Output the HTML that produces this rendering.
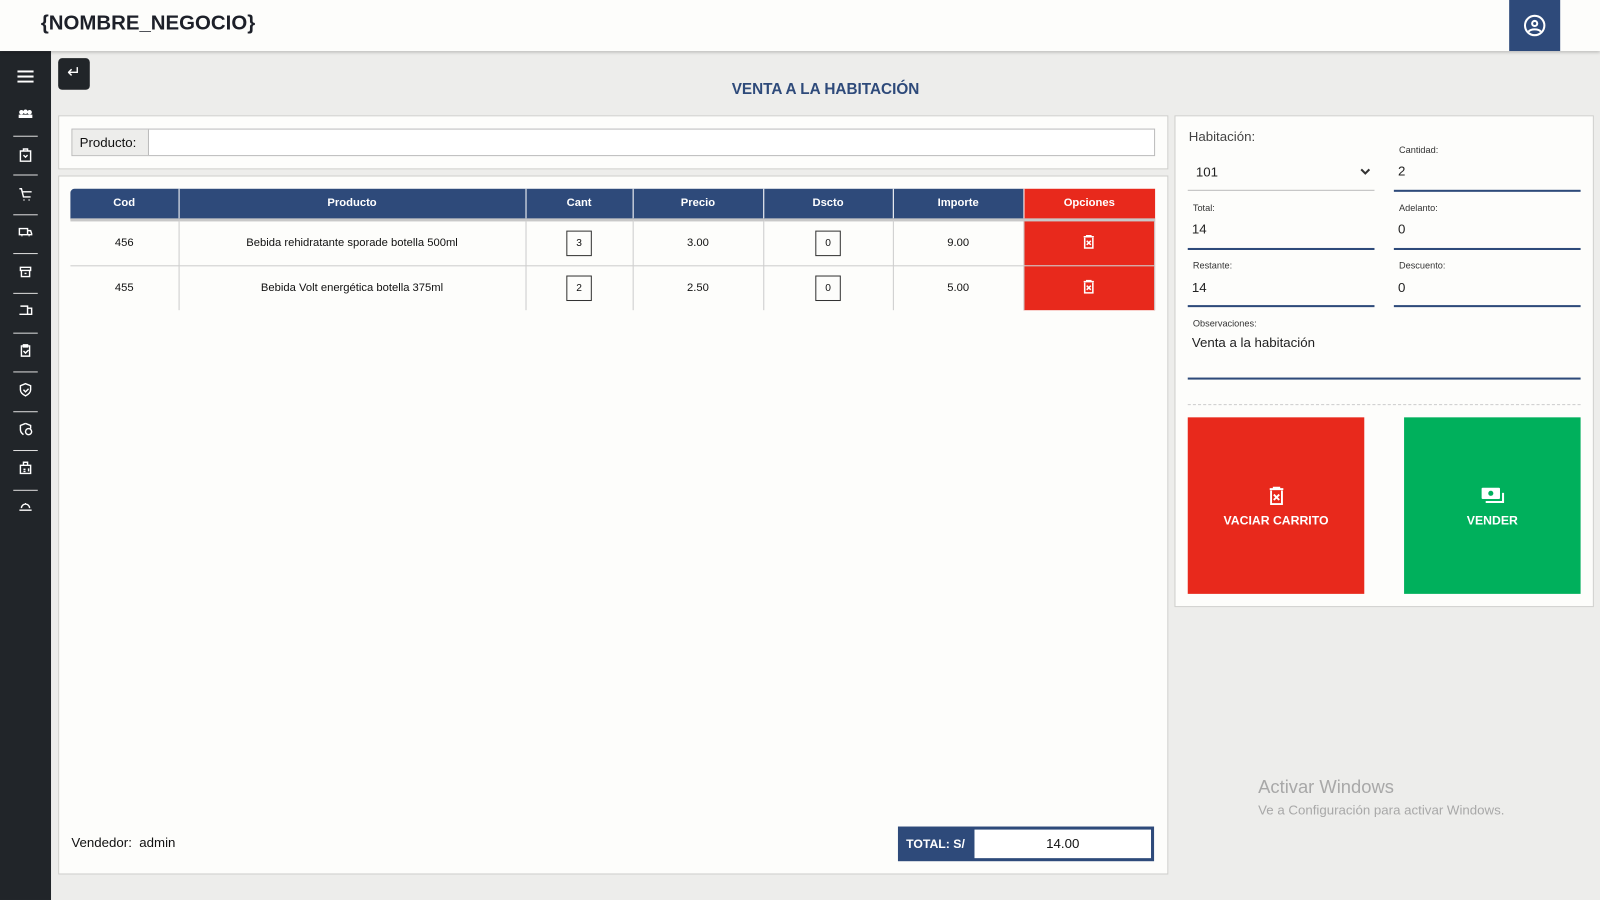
<!DOCTYPE html>
<html><head><meta charset="utf-8"><style>
*{box-sizing:border-box;margin:0;padding:0}
body{width:1600px;height:900px;background:#fdfdfb;font-family:"Liberation Sans",sans-serif;position:relative;overflow:hidden;color:#111}
#wrap{position:absolute;left:0;top:0;width:1568px;height:882px;transform:scale(1.0204);transform-origin:0 0}
.abs{position:absolute}
.hdr{left:0;top:0;width:1568px;height:50px;background:#fdfdfb;box-shadow:0 2px 3px rgba(0,0,0,.2);z-index:2}
.main{left:50px;top:50px;width:1518px;height:832px;background:#ededeb}
.side{left:0;top:50px;width:50px;height:832px;background:#212529}
.side .ln{position:absolute;left:13px;width:24px;height:1px;background:#ddd}
.box{background:#fdfdfb;border:1px solid #cfcfcc}
table{border-collapse:collapse;font-size:11px}
th{background:#2e4a7a;color:#fff;font-weight:bold;height:30px;border-right:1px solid #fff;border-bottom:3px solid #c8c8c8}
td{text-align:center;border-right:1px solid #ccc;border-bottom:1px solid #ccc}
.q{display:inline-block;width:25px;height:25px;border:1px solid #333;line-height:23px;font-size:10px}
.lbl{font-size:9px;color:#333}
.val{font-size:13px;color:#222}
.ul{height:2px;background:#2e4a7a}
</style></head><body><div id="wrap">
<div class="abs hdr"><div class="abs" style="left:40px;top:12px;font-size:20px;font-weight:bold;color:#1d2029">{NOMBRE_NEGOCIO}</div>
<div class="abs" style="left:1479px;top:0;width:50px;height:50px;background:#2e4a7a"><svg class="abs" style="left:14px;top:14px" width="22" height="22" viewBox="0 0 22 22" fill="none" stroke="#fff" stroke-width="2"><circle cx="11" cy="11" r="9.5"/><circle cx="11" cy="9" r="2.5"/><path d="M5 17c2-3 10-3 12 0"/></svg></div></div>
<div class="abs main"></div>
<div class="abs side">
<svg class="abs" style="left:17px;top:19px" width="16" height="12"><rect y="0" width="16" height="2" fill="#fff"/><rect y="5" width="16" height="2" fill="#fff"/><rect y="10" width="16" height="2" fill="#fff"/></svg>
<div class="ln" style="top:83px"></div><div class="ln" style="top:121px"></div><div class="ln" style="top:160px"></div><div class="ln" style="top:198px"></div><div class="ln" style="top:237px"></div><div class="ln" style="top:276px"></div><div class="ln" style="top:314px"></div><div class="ln" style="top:353px"></div><div class="ln" style="top:391px"></div><div class="ln" style="top:430px"></div>
<svg class="abs" style="left:18px;top:57px" width="14" height="400" fill="none" stroke="#fff" stroke-width="1.4">
<circle cx="3" cy="3" r="1.5" fill="#fff"/><circle cx="7" cy="2.5" r="1.5" fill="#fff"/><circle cx="11" cy="3" r="1.5" fill="#fff"/><path d="M1 8h12v-2H1z" fill="#fff"/>
<path d="M2 41h10v10H2zM5 41v-2h4v2M5 45l2 2 2-2"/>
<path d="M1 78h2l2 8h7M4 81h9M5 89h1M10 89h1"/>
<path d="M1 117h8v6H1zM9 119h3l1 3v1h-4M3 124h1M10 124h1"/>
<path d="M2 155h10v3H2zM3 158v6h8v-6M6 161h2"/>
<path d="M2 193h7v8H1M9 195h4v6H9z"/>
<path d="M3 232h8v10H3zM5 231h4v2H5zM5 237l2 2 3-3"/>
<path d="M7 269l5 2v4c0 3-3 5-5 6-2-1-5-3-5-6v-4zM5 275l2 2 3-3"/>
<path d="M7 308l5 2v3M7 308l-5 2v4c0 3 2 4 3 5"/><circle cx="10" cy="316" r="3"/>
<path d="M2 349h10v8H2zM5 349v-3h4v3M5 353h2M5 355h2M10 352v3"/>
<path d="M1 393h12M3 391a4 4 0 0 1 8 0M7 386v1"/></svg>
</div>
<div class="abs" style="left:57px;top:57px;width:31px;height:31px;background:#212529;border-radius:4px;color:#fff;font-size:16px;text-align:center;line-height:29px">&#8629;</div>
<div class="abs" style="left:0;width:1618px;top:79px;text-align:center;font-size:15px;font-weight:bold;color:#2e4a7a">VENTA A LA HABITACIÓN</div>
<div class="abs box" style="left:57px;top:113px;width:1088px;height:53px">
<div class="abs" style="left:12px;top:12px;width:1062px;height:27px;border:1px solid #bbb;background:#fff"><div style="width:75px;height:25px;background:#ededeb;border-right:1px solid #bbb;font-size:13px;line-height:25px;padding-left:7px">Producto:</div></div></div>
<div class="abs box" style="left:57px;top:172px;width:1088px;height:685px">
<table class="abs" style="left:11px;top:12px;width:1063px">
<tr><th style="width:106px;border-radius:4px 0 0 0">Cod</th><th style="width:340px">Producto</th><th style="width:105px">Cant</th><th style="width:128px">Precio</th><th style="width:127px">Dscto</th><th style="width:128px">Importe</th><th style="background:#e8291c;border-right:0">Opciones</th></tr>
<tr style="height:45px"><td>456</td><td>Bebida rehidratante sporade botella 500ml</td><td><span class="q">3</span></td><td>3.00</td><td><span class="q">0</span></td><td>9.00</td><td style="background:#e8291c;border-bottom:1px solid #ccc"><svg width="12" height="14" viewBox="0 0 12 14" fill="none" stroke="#fff" stroke-width="1.5"><path d="M1 2h10M4 2V1h4v1M2 3v10h8V3M4 6l4 4M8 6l-4 4"/></svg></td></tr>
<tr style="height:44px"><td style="border-bottom:0">455</td><td style="border-bottom:0">Bebida Volt energética botella 375ml</td><td style="border-bottom:0"><span class="q">2</span></td><td style="border-bottom:0">2.50</td><td style="border-bottom:0"><span class="q">0</span></td><td style="border-bottom:0">5.00</td><td style="background:#e8291c;border-bottom:0"><svg width="12" height="14" viewBox="0 0 12 14" fill="none" stroke="#fff" stroke-width="1.5"><path d="M1 2h10M4 2V1h4v1M2 3v10h8V3M4 6l4 4M8 6l-4 4"/></svg></td></tr>
</table>
<div class="abs" style="left:12px;top:645px;font-size:13px">Vendedor:&nbsp; admin</div>
<div class="abs" style="left:822px;top:637px;width:251px;height:34px;background:#2e4a7a"><div class="abs" style="left:8px;top:10px;color:#fff;font-weight:bold;font-size:12px">TOTAL: S/</div><div class="abs" style="left:75px;top:3px;width:173px;height:28px;background:#fff;text-align:center;line-height:28px;font-size:13px">14.00</div></div>
</div>
<div class="abs box" style="left:1151px;top:113px;width:411px;height:482px">
<div class="abs" style="left:13px;top:12px;font-size:13px;color:#444">Habitación:</div>
<div class="abs val" style="left:20px;top:47px">101</div><svg class="abs" style="left:181px;top:51px" width="10" height="7" fill="none" stroke="#333" stroke-width="2"><path d="M1 1l4 4 4-4"/></svg>
<div class="abs" style="left:12px;top:72px;width:183px;height:1px;background:#bbb"></div>
<div class="abs lbl" style="left:219px;top:28px">Cantidad:</div><div class="abs val" style="left:218px;top:46px">2</div><div class="abs ul" style="left:214px;top:72px;width:183px"></div>
<div class="abs lbl" style="left:17px;top:85px">Total:</div><div class="abs val" style="left:16px;top:103px">14</div><div class="abs ul" style="left:12px;top:129px;width:183px"></div>
<div class="abs lbl" style="left:219px;top:85px">Adelanto:</div><div class="abs val" style="left:218px;top:103px">0</div><div class="abs ul" style="left:214px;top:129px;width:183px"></div>
<div class="abs lbl" style="left:17px;top:141px">Restante:</div><div class="abs val" style="left:16px;top:160px">14</div><div class="abs ul" style="left:12px;top:185px;width:183px"></div>
<div class="abs lbl" style="left:219px;top:141px">Descuento:</div><div class="abs val" style="left:218px;top:160px">0</div><div class="abs ul" style="left:214px;top:185px;width:183px"></div>
<div class="abs lbl" style="left:17px;top:198px">Observaciones:</div><div class="abs val" style="left:16px;top:214px">Venta a la habitación</div><div class="abs ul" style="left:12px;top:256px;width:385px"></div>
<div class="abs" style="left:12px;top:282px;width:385px;border-top:1px dashed #ccc"></div>
<div class="abs" style="left:12px;top:295px;width:173px;height:173px;background:#e8291c;color:#fff;text-align:center"><svg style="margin-top:67px" width="16" height="20" viewBox="0 0 12 14" fill="none" stroke="#fff" stroke-width="1.4"><path d="M1 2h10M4 2V1h4v1M2 3v10h8V3M4 6l4 4M8 6l-4 4"/></svg><div style="font-weight:bold;font-size:12px;margin-top:2px">VACIAR CARRITO</div></div>
<div class="abs" style="left:224px;top:295px;width:173px;height:173px;background:#00b05c;color:#fff;text-align:center"><svg style="margin-top:67px" width="24" height="20" viewBox="0 0 24 20"><rect x="1" y="2" width="18" height="11" rx="1" fill="#fff"/><circle cx="10" cy="7.5" r="2.5" fill="#00b05c"/><path d="M22 7v9H5" fill="none" stroke="#fff" stroke-width="2"/></svg><div style="font-weight:bold;font-size:12px;margin-top:2px">VENDER</div></div>
</div>
<div class="abs" style="left:1233px;top:761px;font-size:18px;color:#a8a8a8">Activar Windows</div>
<div class="abs" style="left:1233px;top:786px;font-size:13px;color:#a8a8a8">Ve a Configuración para activar Windows.</div>
</div></body></html>
